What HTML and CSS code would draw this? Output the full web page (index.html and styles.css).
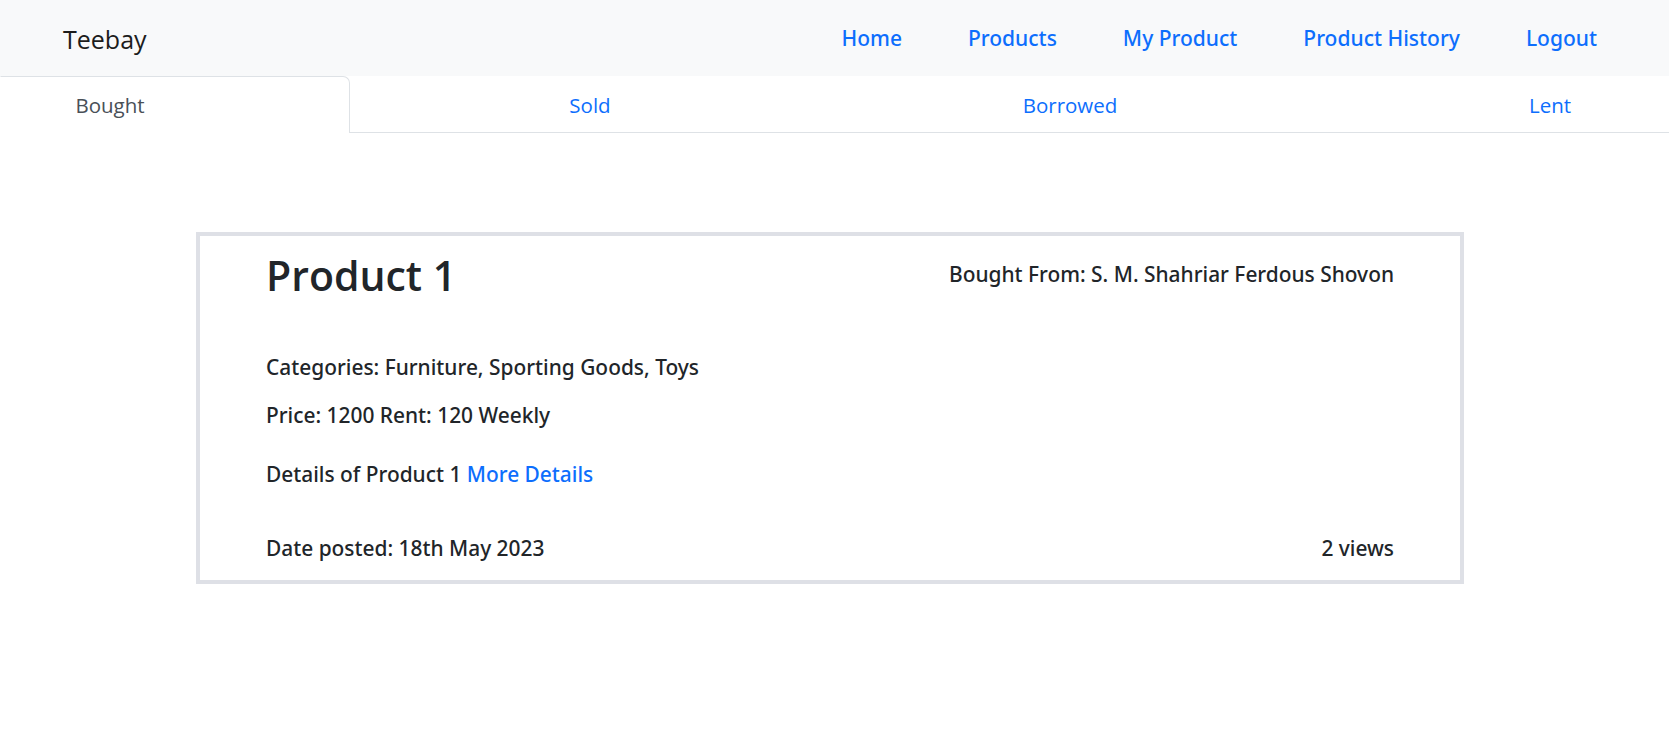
FILE: index.html
```html
<!DOCTYPE html>
<html lang="en">
<head>
<meta charset="utf-8">
<title>Teebay</title>
<link rel="stylesheet" href="styles.css">
</head>
<body>
<nav class="navbar">
  <a class="brand" href="#">Teebay</a>
  <ul class="nav-links">
    <li><a href="#">Home</a></li>
    <li><a href="#">Products</a></li>
    <li><a href="#">My Product</a></li>
    <li><a href="#">Product History</a></li>
    <li><a href="#">Logout</a></li>
  </ul>
</nav>
<div class="tabs-wrap">
  <ul class="tabs">
    <li class="tab tab-first active"><a href="#">Bought</a></li>
    <li class="tab"><a href="#">Sold</a></li>
    <li class="tab"><a href="#">Borrowed</a></li>
    <li class="tab tab-last"><a href="#">Lent</a></li>
  </ul>
</div>
<main class="content">
  <div class="card">
    <div class="card-head">
      <h2 class="title">Product 1</h2>
      <p class="from">Bought From: S. M. Shahriar Ferdous Shovon</p>
    </div>
    <p class="line categories">Categories: Furniture, Sporting Goods, Toys</p>
    <p class="line price">Price: 1200 Rent: 120 Weekly</p>
    <p class="line details">Details of Product 1 <a href="#" class="more">More Details</a></p>
    <div class="card-foot">
      <p class="line">Date posted: 18th May 2023</p>
      <p class="line">2 views</p>
    </div>
  </div>
</main>
</body>
</html>
```

FILE: styles.css
```css
* { box-sizing: border-box; }
html, body { margin: 0; padding: 0; }
body {
  font-family: "Open Sans", "Noto Sans", sans-serif;
  color: #212529;
  background: #fff;
}
a { text-decoration: none; }

.navbar {
  height: 76px;
  background: #f8f9fa;
  display: flex;
  align-items: center;
  justify-content: space-between;
  padding: 0 72px 0 63px;
}
.brand {
  font-size: 25px;
  line-height: 37px;
  color: #1c1c1c;
  padding-top: 2px;
}
.nav-links {
  list-style: none;
  margin: 0;
  padding: 0;
  display: flex;
  gap: 66px;
}
.nav-links a {
  font-family: "Noto Sans", "Open Sans", sans-serif;
  font-size: 21px;
  line-height: 30px;
  font-weight: 500;
  color: #0d6efd;
  display: block;
}

.tabs-wrap {
  border-bottom: 1px solid #dee2e6;
  height: 57px;
}
.tabs {
  list-style: none;
  margin: 0;
  padding: 0;
  display: flex;
}
.tab {
  flex: 0 0 480px;
  text-align: center;
  border: 1px solid transparent;
  border-bottom: 0;
  padding: 13px 0 13px;
  height: 57px;
  font-size: 20.5px;
  line-height: 30px;
}
.tab-first {
  flex-basis: 350px;
  padding-right: 130px;
}
.tab-last {
  flex: 1 1 auto;
  padding-left: 121px;
}
.tab a { color: #0d6efd; }
.tab.active {
  border-color: #dee2e6;
  border-left-color: transparent;
  border-top-right-radius: 7px;
  background: #fff;
}
.tab.active a { color: #495057; }

.content {
  padding-top: 99px;
}
.card {
  margin-left: 196px;
  width: 1268px;
  border: 4px solid #dee0e6;
  padding: 14px 66px 17px 66px;
}
.card-head {
  display: flex;
  justify-content: space-between;
  align-items: flex-start;
}
.title {
  margin: 0;
  font-size: 41px;
  line-height: 50px;
  font-weight: 600;
  color: #212529;
}
.from {
  margin: 9px 0 0;
  font-family: "Noto Sans", "Open Sans", sans-serif;
  font-size: 20.9px;
  line-height: 30px;
  font-weight: 500;
}
.line {
  margin: 0;
  font-family: "Noto Sans", "Open Sans", sans-serif;
  font-size: 20.9px;
  line-height: 30px;
  font-weight: 500;
}
.categories { margin-top: 52px; }
.price { margin-top: 18px; }
.details { margin-top: 29px; }
.more { color: #0d6efd; }
.card-foot {
  margin-top: 44px;
  display: flex;
  justify-content: space-between;
}
```
